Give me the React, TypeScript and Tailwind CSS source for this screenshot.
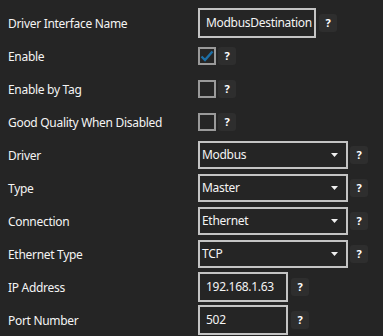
import React from "react";

const font = { fontFamily: '"Noto Sans", "Open Sans", sans-serif' };

function Help() {
  return (
    <div className="flex h-[18px] w-[18px] items-center justify-center rounded-[3px] bg-[#2e2e2e] text-[11px] font-bold leading-none text-white">
      ?
    </div>
  );
}

function TextBox({ value, w }: { value: string; w: string }) {
  return (
    <div className={`flex items-center gap-[3px]`}>
      <div className={`${w} flex h-[30px] items-center border-2 border-[#c4c4c4] pl-[6px] pt-[1px] text-[12px] tracking-[-0.3px] text-[#f4f4f4]`}>
        {value}
      </div>
      <Help />
    </div>
  );
}

function Check({ checked }: { checked?: boolean }) {
  return (
    <div className="flex items-center gap-[2px]">
      <div className="flex h-[18px] w-[18px] items-center justify-center border-2 border-[#9a9a9a]">
        {checked && (
          <svg width="14" height="12" viewBox="0 0 14 12">
            <path d="M1.5 6.5 L5 10 L12.5 1.5" fill="none" stroke="#1d6fa6" strokeWidth="2.4" />
          </svg>
        )}
      </div>
      <Help />
    </div>
  );
}

function Select({ value }: { value: string }) {
  return (
    <div className="flex items-center gap-[2px]">
      <div className="flex h-[28px] w-[150px] items-center justify-between border-2 border-[#c4c4c4] pl-[2px] pr-[8px] pt-[1px] text-[12px] tracking-[-0.3px] text-[#f4f4f4]">
        <span>{value}</span>
        <svg width="7" height="4" viewBox="0 0 7 4">
          <path d="M0 0 H7 L3.5 4 Z" fill="#f0f0f0" />
        </svg>
      </div>
      <Help />
    </div>
  );
}

export default function App() {
  const rows: [string, React.ReactNode][] = [
    ["Driver Interface Name", <TextBox value="ModbusDestination" w="w-[118px]" />],
    ["Enable", <Check checked />],
    ["Enable by Tag", <Check />],
    ["Good Quality When Disabled", <Check />],
    ["Driver", <Select value="Modbus" />],
    ["Type", <Select value="Master" />],
    ["Connection", <Select value="Ethernet" />],
    ["Ethernet Type", <Select value="TCP" />],
    ["IP Address", <TextBox value="192.168.1.63" w="w-[90px]" />],
    ["Port Number", <TextBox value="502" w="w-[90px]" />],
  ];
  return (
    <div className="h-[336px] w-[383px] overflow-hidden bg-[#252525] pt-[6px]" style={font}>
      {rows.map(([label, ctrl], i) => (
        <div key={i} className="flex h-[33px] items-center">
          <div className="w-[198px] pl-[8px] pt-[2px] text-[12px] tracking-[-0.3px] text-[#f4f4f4]">{label}</div>
          {ctrl}
        </div>
      ))}
    </div>
  );
}
